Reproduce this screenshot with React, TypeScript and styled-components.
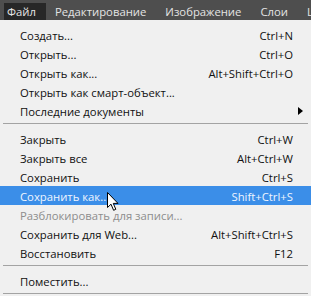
import React from 'react';
import styled, { createGlobalStyle } from 'styled-components';

const GlobalStyle = createGlobalStyle`
  html, body {
    margin: 0;
    padding: 0;
    background: #f0f0f0;
  }
  body {
    font-family: 'Open Sans', 'Noto Sans', sans-serif;
    -webkit-font-smoothing: antialiased;
  }
`;

const Screen = styled.div`
  position: relative;
  width: 311px;
  height: 296px;
  overflow: hidden;
  background: #f0f0f0;
`;

const MenuBar = styled.div`
  display: flex;
  align-items: stretch;
  height: 20px;
  padding: 3px 0 0 4px;
  box-sizing: border-box;
  background: #4e4e4e;
  gap: 6px;
  white-space: nowrap;
  overflow: hidden;
`;

const BarItem = styled.div<{ $active?: boolean }>`
  display: flex;
  align-items: center;
  padding: 0 10px 0 3px;
  font-size: 11.3px;
  color: #e4e4e4;
  background: ${(p) => (p.$active ? '#272727' : 'transparent')};
`;

const Panel = styled.div`
  display: flex;
  flex-direction: column;
  padding-top: 5px;
`;

const Row = styled.div<{ $hover?: boolean; $disabled?: boolean }>`
  display: flex;
  align-items: center;
  justify-content: space-between;
  height: 19px;
  padding: 1px 18px 0 20px;
  box-sizing: border-box;
  font-size: 11.3px;
  white-space: nowrap;
  color: ${(p) => (p.$disabled ? '#8d8d8d' : p.$hover ? '#eef5ff' : '#111')};
  background: ${(p) => (p.$hover ? '#3b8ee8' : 'transparent')};
`;

const Shortcut = styled.span`
  text-align: right;
`;

const SubArrow = styled.span`
  width: 0;
  height: 0;
  margin-right: -10px;
  border-top: 4px solid transparent;
  border-bottom: 4px solid transparent;
  border-left: 5px solid #000;
`;

const Separator = styled.div`
  height: 1px;
  margin: 3px 3px 5px 3px;
  background: #a3a3a3;
`;

const Cursor = styled.svg`
  position: absolute;
  left: 107px;
  top: 192px;
`;

type Item =
  | { label: string; key?: string; sub?: boolean; hover?: boolean; disabled?: boolean }
  | 'sep';

const items: Item[] = [
  { label: 'Создать...', key: 'Ctrl+N' },
  { label: 'Открыть...', key: 'Ctrl+O' },
  { label: 'Открыть как...', key: 'Alt+Shift+Ctrl+O' },
  { label: 'Открыть как смарт-объект...' },
  { label: 'Последние документы', sub: true },
  'sep',
  { label: 'Закрыть', key: 'Ctrl+W' },
  { label: 'Закрыть все', key: 'Alt+Ctrl+W' },
  { label: 'Сохранить', key: 'Ctrl+S' },
  { label: 'Сохранить как...', key: 'Shift+Ctrl+S', hover: true },
  { label: 'Разблокировать для записи...', disabled: true },
  { label: 'Сохранить для Web...', key: 'Alt+Shift+Ctrl+S' },
  { label: 'Восстановить', key: 'F12' },
  'sep',
  { label: 'Поместить...' },
  'sep',
];

const App = () => {
  return (
    <Screen>
      <GlobalStyle />
      <MenuBar>
        <BarItem $active>Файл</BarItem>
        <BarItem>Редактирование</BarItem>
        <BarItem>Изображение</BarItem>
        <BarItem>Слои</BarItem>
        <BarItem>Шрифт</BarItem>
      </MenuBar>
      <Panel>
        {items.map((it, i) =>
          it === 'sep' ? (
            <Separator key={i} />
          ) : (
            <Row key={i} $hover={it.hover} $disabled={it.disabled}>
              <span>{it.label}</span>
              {it.key && <Shortcut>{it.key}</Shortcut>}
              {it.sub && <SubArrow />}
            </Row>
          )
        )}
      </Panel>
      <Cursor width="12" height="19" viewBox="0 0 12 19">
        <path
          d="M0.5 0.5 L0.5 15.5 L4 12.2 L6.6 18.3 L8.8 17.3 L6.3 11.4 L11 11.4 Z"
          fill="#fff"
          stroke="#000"
          strokeWidth="1"
          strokeLinejoin="miter"
        />
      </Cursor>
    </Screen>
  );
};

export default App;
